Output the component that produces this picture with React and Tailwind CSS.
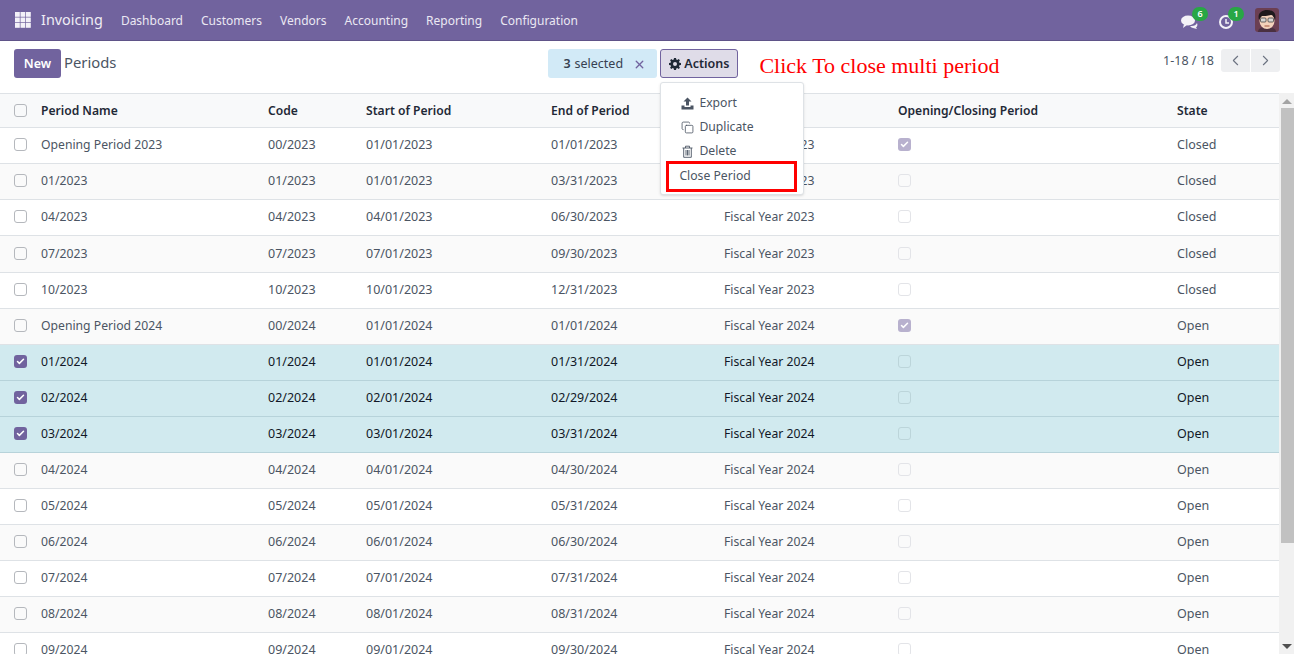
import React from 'react';
import { X, ChevronLeft, ChevronRight, Copy, Check } from 'lucide-react';

const menu = ['Dashboard', 'Customers', 'Vendors', 'Accounting', 'Reporting', 'Configuration'];

const rows = [
  ['Opening Period 2023', '00/2023', '01/01/2023', '01/01/2023', 'Fiscal Year 2023', true, 'Closed'],
  ['01/2023', '01/2023', '01/01/2023', '03/31/2023', 'Fiscal Year 2023', false, 'Closed'],
  ['04/2023', '04/2023', '04/01/2023', '06/30/2023', 'Fiscal Year 2023', false, 'Closed'],
  ['07/2023', '07/2023', '07/01/2023', '09/30/2023', 'Fiscal Year 2023', false, 'Closed'],
  ['10/2023', '10/2023', '10/01/2023', '12/31/2023', 'Fiscal Year 2023', false, 'Closed'],
  ['Opening Period 2024', '00/2024', '01/01/2024', '01/01/2024', 'Fiscal Year 2024', true, 'Open'],
  ['01/2024', '01/2024', '01/01/2024', '01/31/2024', 'Fiscal Year 2024', false, 'Open', true],
  ['02/2024', '02/2024', '02/01/2024', '02/29/2024', 'Fiscal Year 2024', false, 'Open', true],
  ['03/2024', '03/2024', '03/01/2024', '03/31/2024', 'Fiscal Year 2024', false, 'Open', true],
  ['04/2024', '04/2024', '04/01/2024', '04/30/2024', 'Fiscal Year 2024', false, 'Open'],
  ['05/2024', '05/2024', '05/01/2024', '05/31/2024', 'Fiscal Year 2024', false, 'Open'],
  ['06/2024', '06/2024', '06/01/2024', '06/30/2024', 'Fiscal Year 2024', false, 'Open'],
  ['07/2024', '07/2024', '07/01/2024', '07/31/2024', 'Fiscal Year 2024', false, 'Open'],
  ['08/2024', '08/2024', '08/01/2024', '08/31/2024', 'Fiscal Year 2024', false, 'Open'],
  ['09/2024', '09/2024', '09/01/2024', '09/30/2024', 'Fiscal Year 2024', false, 'Open'],
];

function Box({ checked, selected, muted }) {
  if (checked) {
    return (
      <span className={`flex h-[13px] w-[13px] items-center justify-center rounded-[3px] ${muted ? 'bg-[#b8b1ce]' : 'bg-[#71639e]'}`}>
        <Check size={9} strokeWidth={4} className="text-white" />
      </span>
    );
  }
  return <span className={`block h-[13px] w-[13px] rounded-[3px] border ${selected ? 'border-[#bcd5da]' : muted ? 'border-[#e3e4e8]' : 'border-[#b5b8bd]'}`} />;
}

function Row({ row, index }) {
  const [name, code, start, end, year, opening, state, selected] = row;
  const bg = selected ? 'bg-[#d1eaef] text-[#111827] border-[#b7d3da]' : index % 2 ? 'bg-[#fafafa] text-[#4b5563] border-[#dee2e6]' : 'bg-white text-[#4b5563] border-[#dee2e6]';
  return (
    <div className={`flex items-center border-b shrink-0 ${index === 3 ? 'h-[37px]' : 'h-9'} ${bg}`}>
      <div className="w-[41px] pb-[2px] pl-[14px]"><Box checked={selected} selected={selected} /></div>
      <div className="w-[227px] text-[12.2px]">{name}</div>
      <div className="w-[98px]">{code}</div>
      <div className="w-[185px]">{start}</div>
      <div className="w-[173px]">{end}</div>
      <div className="w-[174px] text-[12.2px]">{year}</div>
      <div className="w-[279px] pb-[2px]"><Box checked={opening} selected={selected} muted /></div>
      <div>{state}</div>
    </div>
  );
}

function UploadIcon() {
  return (
    <svg width="13" height="13" viewBox="0 0 13 13" fill="#4b5563" className="mr-[5px]">
      <path d="M6.500 0.500l4 4h-2.500v4h-3v-4h-2.500z" />
      <path d="M0.500 8.500h3v1.500h6v-1.500h3v4h-12z" />
    </svg>
  );
}

function TrashIcon() {
  return (
    <svg width="13" height="13" viewBox="0 0 13 13" fill="none" stroke="#4b5563" strokeWidth="0.900" className="mr-[5px]">
      <path d="M1.500 3h10M4.500 3V1.200h4V3M2.700 3v9.300h7.600V3M5 5v5.500M6.500 5v5.500M8 5v5.500" />
    </svg>
  );
}

function MenuItem({ icon, label }) {
  return (
    <div className="flex h-6 items-center pl-[20px] text-[12.2px] text-[#4b5563]">
      {icon}
      <span>{label}</span>
    </div>
  );
}

export default function App() {
  return (
    <div className="flex h-screen flex-col overflow-hidden bg-white font-['Noto_Sans',sans-serif] text-[12.5px]">
      <header className="flex h-[41px] shrink-0 items-center bg-[#71639e] border-b border-[#5f5388] text-white">
        <svg className="ml-[15px]" width="16" height="16" viewBox="0 0 16 16" fill="#f3f1f8">
          {[0, 5.5, 11].map((y) => [0, 5.5, 11].map((x) => <rect key={`${x}-${y}`} x={x} y={y} width="4.800" height="4.800" />))}
        </svg>
        <span className="ml-[10px] text-[14.4px] text-[#efedf5]">Invoicing</span>
        <nav className="ml-[9px] flex pt-px text-[12px]">
          {menu.map((m) => <span key={m} className="px-[9px] text-[#ebe8f3]">{m}</span>)}
        </nav>
        <div className="ml-auto mr-[15px] flex items-center">
          <div className="relative mr-[21px] mt-[3px]">
            <svg width="17" height="14" viewBox="0 0 17 14" fill="#f4f2f8" className="block"><ellipse cx="7" cy="5.500" rx="7" ry="5" /><path d="M3 9l-1 4 4-3zM9 11c4 .5 6-1 7-3 1 2 0 4-1 4.500l1 1.500-4-1c-1 0-2-1-3-2z" /></svg>
            <span className="absolute -top-[8px] left-[11px] flex h-[14px] w-4 items-center justify-center rounded-full bg-[#28a745] text-[9px] font-semibold">6</span>
          </div>
          <div className="relative mr-[22px] mt-[3px]">
            <svg width="14" height="14" viewBox="0 0 14 14" fill="none" stroke="#f4f2f8" strokeWidth="2" className="block"><circle cx="7" cy="7" r="6" /><path d="M7 4v4h3" strokeWidth="1.500" /></svg>
            <span className="absolute -top-[8px] left-[9px] flex h-[14px] w-4 items-center justify-center rounded-full bg-[#28a745] text-[9px] font-semibold">1</span>
          </div>
          <svg width="24" height="24" viewBox="0 0 24 24" className="rounded-[3px]">
            <rect width="24" height="24" fill="#6b3f52" />
            <path d="M3 24c0-4 4-5 9-5s9 1 9 5z" fill="#4a3040" />
            <ellipse cx="12" cy="13" rx="7.500" ry="8" fill="#f3d2bb" />
            <path d="M4 12C2 5 7 2 12 2s10 2 8 10c-1-3-2-5-4-5-3 1-8 1-9 1-1 1-2 2-3 4z" fill="#1f1a1c" />
            <rect x="5.500" y="10" width="5.500" height="4" rx="1" fill="#d8d6d2" stroke="#444" strokeWidth=".8" />
            <rect x="13" y="10" width="5.500" height="4" rx="1" fill="#d8d6d2" stroke="#444" strokeWidth=".8" />
            <path d="M9.500 18h5" stroke="#a2543f" />
          </svg>
        </div>
      </header>

      <div className="relative flex h-[52px] shrink-0 items-start pl-[14px] pr-[14px] pt-2">
        <button className="h-[29px] w-[47px] rounded-[3px] bg-[#71639e] pt-px font-semibold text-white">New</button>
        <span className="ml-[3px] mt-[2px] text-[14.8px] text-[#4b5563]">Periods</span>
        <div className="ml-[432px] flex h-[29px] w-[109px] items-center rounded-[3px] bg-[#d2eaf7] pl-[15px] pt-px text-[#374151]">
          <b className="font-semibold">3</b><span className="ml-[4px]">selected</span>
          <X size={13} strokeWidth={2.500} className="ml-[10px] text-[#71639e]" />
        </div>
        <div className="relative ml-[3px]">
          <button className="flex h-[29px] w-[78px] items-center justify-center rounded-[3px] border border-[#71639e] bg-[#dfdce8] pt-px font-semibold text-[#1f2937]">
            <svg width="12" height="12" viewBox="0 0 12 12" fill="#1f2937" className="mr-[3px]">
              <path fillRule="evenodd" d="M5 0h2l.3 1.600 1 .4L9.700 1.100l1.200 1.200L10 3.700l.4 1 1.600.3v2l-1.600.3-.4 1 .9 1.400-1.200 1.200-1.400-.9-1 .4L7 12H5l-.3-1.600-1-.4-1.400.9-1.200-1.200.9-1.400-.4-1L0 7V5l1.600-.3.4-1-.9-1.400 1.200-1.200 1.400.9 1-.4zM6 4a2 2 0 100 4 2 2 0 000-4z" />
            </svg>
            Actions
          </button>
          <div className="absolute left-0 top-[33px] z-10 h-[113px] w-[144px] rounded-[3px] border border-[#dee2e6] bg-white pt-[8px] shadow-sm">
            <MenuItem icon={<UploadIcon />} label="Export" />
            <MenuItem icon={<Copy size={13} strokeWidth={1.500} className="mr-[5px] text-[#4b5563]" />} label="Duplicate" />
            <MenuItem icon={<TrashIcon />} label="Delete" />
            <div className="ml-[5px] mt-[-2px] flex h-[31px] w-[131px] items-center border-[3px] border-[#ff0000] pl-[10px] text-[12.2px] text-[#4b5563]">Close Period</div>
          </div>
        </div>
        <span className="ml-[21px] mt-[1px] font-['Liberation_Serif',serif] text-[22px] leading-[32px] text-[#ff0000]">Click To close multi period</span>
        <span className="ml-auto mt-[3px] text-[#4b5563]">1-18 / 18</span>
        <div className="ml-[7px] flex gap-px">
          <button className="flex h-[23px] w-[29px] items-center justify-center rounded-l-[3px] bg-[#eeeff1] text-[#6b7280]"><ChevronLeft size={17} strokeWidth={1.500} /></button>
          <button className="flex h-[23px] w-[29px] items-center justify-center rounded-r-[3px] bg-[#eeeff1] text-[#6b7280]"><ChevronRight size={17} strokeWidth={1.500} /></button>
        </div>
      </div>

      <div className="flex min-h-0 flex-1">
        <div className="min-w-0 flex-1 overflow-hidden">
          <div className="flex h-[35px] items-center border-y border-[#dee2e6] bg-[#f8f9fa] text-[12.1px] font-semibold text-[#1f2937]">
            <div className="w-[41px] pl-[14px]"><Box /></div>
            <div className="w-[227px] pt-[2px]">Period Name</div>
            <div className="w-[98px] pt-[2px]">Code</div>
            <div className="w-[185px] pt-[2px]">Start of Period</div>
            <div className="w-[173px] pt-[2px]">End of Period</div>
            <div className="w-[174px] pt-[2px]">Fiscal Year</div>
            <div className="w-[279px] pt-[2px]">Opening/Closing Period</div>
            <div className="pt-[2px]">State</div>
          </div>
          {rows.map((r, i) => <Row key={r[0]} row={r} index={i} />)}
        </div>
        <div className="flex w-[15px] shrink-0 flex-col items-center bg-[#f1f1f1]">
          <span className="mt-[6px] h-0 w-0 border-x-[5px] border-b-[5px] border-x-transparent border-b-[#a3a3a3]" />
          <span className="ml-[2px] mt-[4px] h-[435px] w-[13px] bg-[#c1c1c1]" />
          <span className="mt-auto mb-[5px] h-0 w-0 border-x-[5px] border-t-[5px] border-x-transparent border-t-[#505050]" />
        </div>
      </div>
    </div>
  );
}
